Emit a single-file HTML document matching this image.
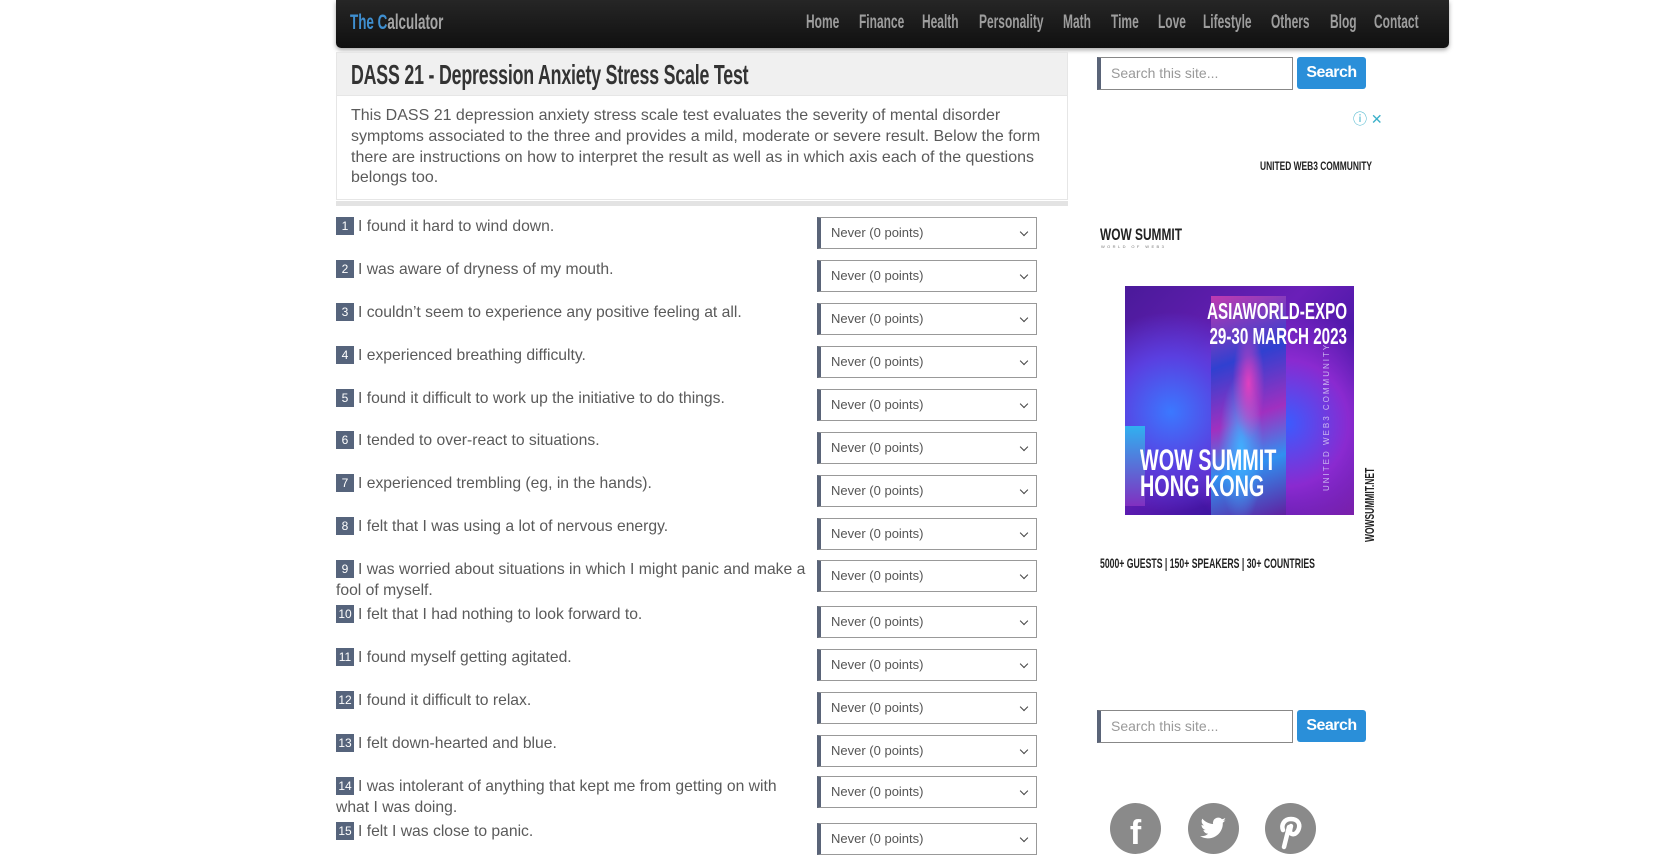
<!DOCTYPE html>
<html><head><meta charset="utf-8"><style>
*{box-sizing:border-box;margin:0;padding:0}
body{width:1680px;height:840px;overflow:hidden;background:#fff;font-family:"Liberation Sans",Arial,sans-serif;position:relative}
.a{position:absolute}
.nav{left:336px;top:0;width:1113px;height:48px;background:linear-gradient(#262626,#101010);border-radius:0 0 5px 5px;box-shadow:0 2px 5px rgba(0,0,0,.35)}
.ni{top:12px;font-size:19px;font-weight:bold;color:#9d9d9d;transform:scaleX(.63);transform-origin:left center;white-space:nowrap}
.tbox{left:336px;top:52px;width:732px;height:44px;background:#f0f0f0;border:1px solid #e6e6e6}
.dbox{left:336px;top:96px;width:732px;height:104px;border:1px solid #e6e6e6;border-top:none}
.q{left:336px;width:476px;font-size:15.7px;line-height:20.5px;color:#5a5a5a}
.b{display:inline-block;background:#56647c;color:#fff;font-size:12px;height:18px;min-width:18px;line-height:18px;text-align:center;vertical-align:1px;padding:0 2px;margin-right:4px}
.s{left:817px;width:220px;height:32px;border:1px solid #999;border-left:4px solid #5a6478;font-size:13px;color:#555;line-height:30px;padding-left:10px}
.s:after{content:"";position:absolute;right:9px;top:11px;width:5px;height:5px;border-right:1.6px solid #444;border-bottom:1.6px solid #444;transform:rotate(45deg)}
.in{width:196px;height:33px;border:1px solid #888;border-left:4px solid #5a6478;font-size:14px;color:#999;line-height:31px;padding-left:10px}
.btn{width:69px;height:32px;background:#2a8fd9;border-radius:3px;color:#fff;font-weight:bold;font-size:16px;line-height:32px;text-align:center;letter-spacing:-.5px}
.soc{width:51px;height:51px;border-radius:50%;background:#8a8a8a;color:#fff;font-weight:bold;font-size:34px;text-align:center;line-height:60px;overflow:hidden}
</style></head><body>
<div class="a nav"></div>
<div class="a" style="left:350px;top:11px;font-size:21px;font-weight:bold;color:#a5a5a5;transform:scaleX(.64);transform-origin:left center;white-space:nowrap"><span style="color:#3f8fd0">The C</span>alculator</div>
<div class="a ni" style="left:806px">Home</div>
<div class="a ni" style="left:859px">Finance</div>
<div class="a ni" style="left:922px">Health</div>
<div class="a ni" style="left:979px">Personality</div>
<div class="a ni" style="left:1063px">Math</div>
<div class="a ni" style="left:1111px">Time</div>
<div class="a ni" style="left:1158px">Love</div>
<div class="a ni" style="left:1203px">Lifestyle</div>
<div class="a ni" style="left:1271px">Others</div>
<div class="a ni" style="left:1330px">Blog</div>
<div class="a ni" style="left:1374px">Contact</div>

<div class="a tbox"></div>
<div class="a" style="left:351px;top:59px;font-size:28px;font-weight:bold;color:#333;transform:scaleX(.635);transform-origin:left center;white-space:nowrap;letter-spacing:-.3px">DASS 21 - Depression Anxiety Stress Scale Test</div>
<div class="a dbox"></div>
<div class="a" style="left:351px;top:106px;width:700px;font-size:16px;line-height:20.8px;color:#5a5a5a">This DASS 21 depression anxiety stress scale test evaluates the severity of mental disorder symptoms associated to the three and provides a mild, moderate or severe result. Below the form there are instructions on how to interpret the result as well as in which axis each of the questions belongs too.</div>
<div class="a" style="left:336px;top:201px;width:732px;height:5px;background:#e3e3e3"></div>

<div class="a q" style="top:217px"><span class="b">1</span>I found it hard to wind down.</div>
<div class="a s" style="top:217px">Never (0 points)</div>
<div class="a q" style="top:260px"><span class="b">2</span>I was aware of dryness of my mouth.</div>
<div class="a s" style="top:260px">Never (0 points)</div>
<div class="a q" style="top:303px"><span class="b">3</span>I couldn’t seem to experience any positive feeling at all.</div>
<div class="a s" style="top:303px">Never (0 points)</div>
<div class="a q" style="top:346px"><span class="b">4</span>I experienced breathing difficulty.</div>
<div class="a s" style="top:346px">Never (0 points)</div>
<div class="a q" style="top:389px"><span class="b">5</span>I found it difficult to work up the initiative to do things.</div>
<div class="a s" style="top:389px">Never (0 points)</div>
<div class="a q" style="top:431px"><span class="b">6</span>I tended to over-react to situations.</div>
<div class="a s" style="top:432px">Never (0 points)</div>
<div class="a q" style="top:474px"><span class="b">7</span>I experienced trembling (eg, in the hands).</div>
<div class="a s" style="top:475px">Never (0 points)</div>
<div class="a q" style="top:517px"><span class="b">8</span>I felt that I was using a lot of nervous energy.</div>
<div class="a s" style="top:518px">Never (0 points)</div>
<div class="a q" style="top:560px"><span class="b">9</span>I was worried about situations in which I might panic and make a fool of myself.</div>
<div class="a s" style="top:560px">Never (0 points)</div>
<div class="a q" style="top:605px"><span class="b">10</span>I felt that I had nothing to look forward to.</div>
<div class="a s" style="top:606px">Never (0 points)</div>
<div class="a q" style="top:648px"><span class="b">11</span>I found myself getting agitated.</div>
<div class="a s" style="top:649px">Never (0 points)</div>
<div class="a q" style="top:691px"><span class="b">12</span>I found it difficult to relax.</div>
<div class="a s" style="top:692px">Never (0 points)</div>
<div class="a q" style="top:734px"><span class="b">13</span>I felt down-hearted and blue.</div>
<div class="a s" style="top:735px">Never (0 points)</div>
<div class="a q" style="top:777px"><span class="b">14</span>I was intolerant of anything that kept me from getting on with what I was doing.</div>
<div class="a s" style="top:776px">Never (0 points)</div>
<div class="a q" style="top:822px"><span class="b">15</span>I felt I was close to panic.</div>
<div class="a s" style="top:823px">Never (0 points)</div>

<div class="a in" style="left:1097px;top:57px">Search this site...</div>
<div class="a btn" style="left:1297px;top:57px">Search</div>
<div class="a" style="left:1353px;top:109px;font-size:14px;color:#3bb0c9">ⓘ ✕</div>
<div class="a" style="left:1260px;top:159px;font-size:12px;font-weight:bold;color:#222;transform:scaleX(.7);transform-origin:left center;white-space:nowrap">UNITED WEB3 COMMUNITY</div>
<div class="a" style="left:1100px;top:225px;font-size:17px;font-weight:bold;color:#222;transform:scaleX(.7);transform-origin:left center;white-space:nowrap">WOW SUMMIT</div>
<div class="a" style="left:1101px;top:244px;font-size:4px;letter-spacing:2.4px;color:#777;white-space:nowrap">WORLD OF WEB3</div>
<div class="a" style="left:1125px;top:286px;width:229px;height:229px;background:radial-gradient(circle at 20% 55%,#3b78ff 0,#5a3fe0 25%,transparent 45%),radial-gradient(circle at 70% 60%,#3a5cff 0,#8a2ad0 30%,transparent 55%),linear-gradient(135deg,#4a1a9a,#6a1fb8 40%,#3d14a0 70%,#7a1fa8);overflow:hidden">
 <div class="a" style="left:86px;top:10px;width:75px;height:219px;background:radial-gradient(ellipse at 50% 40%,#e040c0 0,transparent 30%),radial-gradient(ellipse at 40% 70%,#40b0ff 0,transparent 35%),linear-gradient(160deg,#c03ab0,#3040d0 30%,#a030c0 55%,#3090f0 75%,#6020a0)"></div>
 <div class="a" style="left:0;top:140px;width:20px;height:80px;background:linear-gradient(#30b0f0,#8030c0)"></div>
 <div class="a" style="left:82px;top:13px;font-size:23px;font-weight:bold;color:#fff;transform:scaleX(.66);transform-origin:left center;white-space:nowrap;line-height:25px;text-align:right">ASIAWORLD-EXPO<br>29-30 MARCH 2023</div>
 <div class="a" style="left:15px;top:162px;font-size:30px;font-weight:bold;color:#fff;transform:scaleX(.66);transform-origin:left center;white-space:nowrap;line-height:26px">WOW SUMMIT<br>HONG KONG</div>
 <div class="a" style="left:197px;top:205px;font-size:8px;letter-spacing:2px;color:#c9b8f0;transform:rotate(-90deg);transform-origin:left top;white-space:nowrap">UNITED WEB3 COMMUNITY</div>
</div>
<div class="a" style="left:1362px;top:542px;font-size:13px;font-weight:bold;color:#222;transform:rotate(-90deg) scaleX(.65);transform-origin:left top;white-space:nowrap;">WOWSUMMIT.NET</div>
<div class="a" style="left:1100px;top:555px;font-size:14px;font-weight:bold;color:#222;transform:scaleX(.62);transform-origin:left center;white-space:nowrap">5000+ GUESTS | 150+ SPEAKERS | 30+ COUNTRIES</div>

<div class="a in" style="left:1097px;top:710px">Search this site...</div>
<div class="a btn" style="left:1297px;top:710px">Search</div>
<div class="a soc" style="left:1110px;top:803px">f</div>
<div class="a soc" style="left:1188px;top:803px"><svg width="51" height="51" viewBox="0 0 51 51"><path fill="#fff" d="M38 17c-1 .5-2 .8-3 .9 1.1-.7 1.9-1.7 2.3-2.9-1 .6-2.1 1-3.3 1.3a5.2 5.2 0 0 0-8.9 4.7c-4.3-.2-8.2-2.3-10.8-5.4a5.2 5.2 0 0 0 1.6 6.9c-.9 0-1.700-.3-2.4-.6 0 2.5 1.8 4.6 4.2 5.1-.8.2-1.6.2-2.4.1.7 2.1 2.6 3.6 4.9 3.6A10.5 10.5 0 0 1 12 33a14.8 14.8 0 0 0 22.8-13.2c1-.8 2-1.7 2.7-2.8z"/></svg></div>
<div class="a soc" style="left:1265px;top:803px"><svg width="51" height="51" viewBox="0 0 51 51"><path fill="none" stroke="#fff" stroke-width="4.5" stroke-linecap="round" d="M18 27c-2-5 1-11 8-11s9 5 8 9-4 7-7 6-2-4-1-8M24 24l-5 20"/></svg></div>
</body></html>
